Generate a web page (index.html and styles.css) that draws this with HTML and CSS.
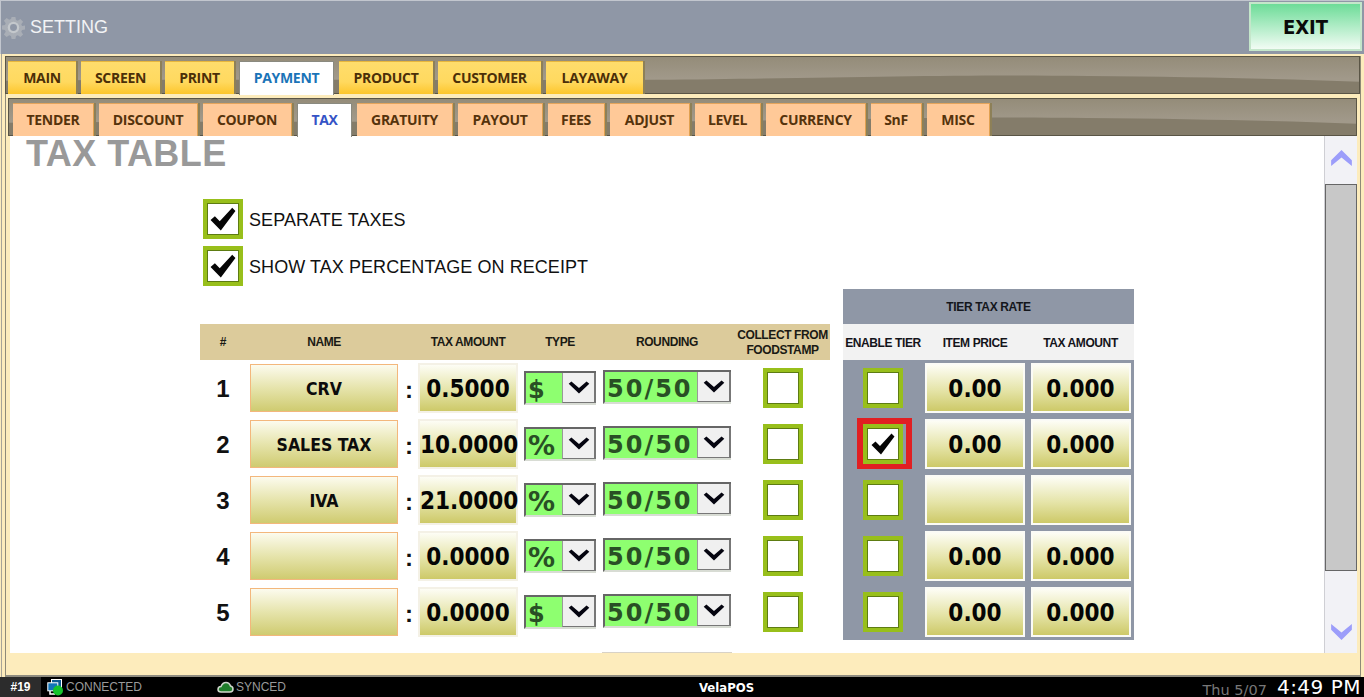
FILE: index.html
```html
<!DOCTYPE html>
<html lang="en">
<head>
<meta charset="utf-8">
<title>Setting</title>
<link rel="stylesheet" href="styles.css">
</head>
<body>
<svg class="defs" width="0" height="0" aria-hidden="true">
  <symbol id="tick" viewBox="0 0 24 22"><path d="M0.5 12 L4.5 8.5 L9 13 L20.5 0.5 L23.5 3.5 L10 21.5 Z"/></symbol>
  <symbol id="chev" viewBox="0 0 20 12"><path d="M0.5 2.5 L3 0.5 L10 6.5 L17 0.5 L19.5 2.5 L10 11.5 Z"/></symbol>
  <symbol id="wave" viewBox="0 0 1000 38" preserveAspectRatio="none"><path d="M0 25 C150 23 300 25 480 24 C620 22 700 18 800 20 C880 21 940 23 1000 26 L1000 38 L0 38 Z"/></symbol>
</svg>
<header class="topbar">
  <div class="title">
    <svg class="gear" viewBox="0 0 24 24" width="23" height="23"><path d="M10 1h4l.6 3.2 1.9.8 2.7-1.9 2.8 2.8-1.9 2.7.8 1.9L24 10v4l-3.1.6-.8 1.9 1.9 2.7-2.8 2.8-2.7-1.9-1.9.8L14 24h-4l-.6-3.1-1.9-.8-2.7 1.9-2.8-2.8 1.9-2.7-.8-1.9L0 14v-4l3.1-.6.8-1.9L2 4.9l2.8-2.8 2.7 1.9 1.9-.8z"/><circle class="gear-hole" cx="12" cy="12" r="6"/><circle class="gear-core" cx="12" cy="12" r="3.6"/></svg>
    <span>SETTING</span>
  </div>
  <button class="exit">EXIT</button>
</header>
<main class="panel">
  <div class="outer">
    <nav class="bar tabs-main">
      <svg class="wave"><use href="#wave"/></svg>
      <a class="tab gold">MAIN</a><a class="tab gold">SCREEN</a><a class="tab gold">PRINT</a><a class="tab active pay">PAYMENT</a><a class="tab gold">PRODUCT</a><a class="tab gold">CUSTOMER</a><a class="tab gold">LAYAWAY</a>
    </nav>
    <div class="inner">
      <nav class="bar tabs-sub">
        <svg class="wave"><use href="#wave"/></svg>
        <a class="tab peach">TENDER</a><a class="tab peach">DISCOUNT</a><a class="tab peach">COUPON</a><a class="tab active tax">TAX</a><a class="tab peach">GRATUITY</a><a class="tab peach">PAYOUT</a><a class="tab peach">FEES</a><a class="tab peach">ADJUST</a><a class="tab peach">LEVEL</a><a class="tab peach">CURRENCY</a><a class="tab peach">SnF</a><a class="tab peach">MISC</a>
      </nav>
      <section class="content">
        <div class="page">
          <h1 class="page-title">TAX TABLE</h1>
          <label class="opt"><span class="chk"><svg class="tick"><use href="#tick"/></svg></span><span class="opt-text">SEPARATE TAXES</span></label>
          <label class="opt"><span class="chk"><svg class="tick"><use href="#tick"/></svg></span><span class="opt-text">SHOW TAX PERCENTAGE ON RECEIPT</span></label>
          <div class="tables">
            <div class="taxes">
              <div class="row head">
                <div class="c-num">#</div><div class="c-name">NAME</div><div></div><div class="c-amt">TAX AMOUNT</div><div class="c-type">TYPE</div><div class="c-round">ROUNDING</div><div class="c-coll">COLLECT FROM<br>FOODSTAMP</div>
              </div>
              <div class="row">
                <div class="c-num num">1</div><button class="c-name name">CRV</button><div class="colon">:</div><button class="c-amt val">0.5000</button>
                <div class="c-type sel"><span class="sel-v">$</span><span class="sel-a"><svg class="chev"><use href="#chev"/></svg></span></div>
                <div class="c-round sel rnd"><span class="sel-v">50/50</span><span class="sel-a"><svg class="chev"><use href="#chev"/></svg></span></div>
                <div class="c-coll"><span class="chk"></span></div>
              </div>
              <div class="row">
                <div class="c-num num">2</div><button class="c-name name">SALES TAX</button><div class="colon">:</div><button class="c-amt val">10.0000</button>
                <div class="c-type sel"><span class="sel-v pct">%</span><span class="sel-a"><svg class="chev"><use href="#chev"/></svg></span></div>
                <div class="c-round sel rnd"><span class="sel-v">50/50</span><span class="sel-a"><svg class="chev"><use href="#chev"/></svg></span></div>
                <div class="c-coll"><span class="chk"></span></div>
              </div>
              <div class="row">
                <div class="c-num num">3</div><button class="c-name name">IVA</button><div class="colon">:</div><button class="c-amt val">21.0000</button>
                <div class="c-type sel"><span class="sel-v pct">%</span><span class="sel-a"><svg class="chev"><use href="#chev"/></svg></span></div>
                <div class="c-round sel rnd"><span class="sel-v">50/50</span><span class="sel-a"><svg class="chev"><use href="#chev"/></svg></span></div>
                <div class="c-coll"><span class="chk"></span></div>
              </div>
              <div class="row">
                <div class="c-num num">4</div><button class="c-name name"></button><div class="colon">:</div><button class="c-amt val">0.0000</button>
                <div class="c-type sel"><span class="sel-v pct">%</span><span class="sel-a"><svg class="chev"><use href="#chev"/></svg></span></div>
                <div class="c-round sel rnd"><span class="sel-v">50/50</span><span class="sel-a"><svg class="chev"><use href="#chev"/></svg></span></div>
                <div class="c-coll"><span class="chk"></span></div>
              </div>
              <div class="row">
                <div class="c-num num">5</div><button class="c-name name"></button><div class="colon">:</div><button class="c-amt val">0.0000</button>
                <div class="c-type sel"><span class="sel-v">$</span><span class="sel-a"><svg class="chev"><use href="#chev"/></svg></span></div>
                <div class="c-round sel rnd"><span class="sel-v">50/50</span><span class="sel-a"><svg class="chev"><use href="#chev"/></svg></span></div>
                <div class="c-coll"><span class="chk"></span></div>
              </div>
              <div class="next-peek"></div>
            </div>
            <div class="tier">
              <div class="tier-title">TIER TAX RATE</div>
              <div class="trow thead"><div>ENABLE TIER</div><div>ITEM PRICE</div><div>TAX AMOUNT</div></div>
              <div class="trow"><div><span class="chk"></span></div><button class="tval">0.00</button><button class="tval">0.000</button></div>
              <div class="trow"><div><span class="hl"><span class="chk"><svg class="tick small"><use href="#tick"/></svg></span></span></div><button class="tval">0.00</button><button class="tval">0.000</button></div>
              <div class="trow"><div><span class="chk"></span></div><button class="tval"></button><button class="tval"></button></div>
              <div class="trow"><div><span class="chk"></span></div><button class="tval">0.00</button><button class="tval">0.000</button></div>
              <div class="trow"><div><span class="chk"></span></div><button class="tval">0.00</button><button class="tval">0.000</button></div>
            </div>
          </div>
        </div>
        <aside class="scroll">
          <svg class="arrow" viewBox="0 0 22 17" width="21" height="16"><path d="M11 0 L22 11 L22 17 L11 8 L0 17 L0 11 Z"/></svg>
          <div class="thumb"></div>
          <svg class="arrow" viewBox="0 0 22 17" width="21" height="16"><path d="M0 0 L11 9 L22 0 L22 6 L11 17 L0 6 Z"/></svg>
        </aside>
      </section>
    </div>
  </div>
</main>
<footer class="status">
  <div class="station">#19</div>
  <div class="conn">
    <svg viewBox="0 0 17 17" width="17" height="17"><rect class="s1" x="4.5" y="0.5" width="10" height="8"/><rect class="s2" x="0.8" y="3.8" width="10" height="8"/><path class="s3" d="M3 12v3h5"/><circle class="s4" cx="11" cy="11.5" r="5"/></svg>
    <span>CONNECTED</span>
  </div>
  <div class="sync">
    <svg viewBox="0 0 17 12" width="17" height="12"><path class="c1" d="M1 8.5 C1 6 3 5.5 4 5.5 C5 3 7 1.5 9 1.5 C11.5 1.5 13 3.500 13.500 5 C15 5.200 16 6.500 16 8 C16 10 14.500 11 13 11 L4 11 C2 11 1 10 1 8.500Z"/></svg>
    <span>SYNCED</span>
  </div>
  <div class="brand">VelaPOS</div>
  <div class="date">Thu 5/07</div>
  <div class="time">4:49 PM</div>
</footer>
</body>
</html>
```
FILE: styles.css
```css
* { box-sizing: border-box; }
html, body { margin: 0; padding: 0; }
body {
  width: 1364px;
  height: 697px;
  overflow: hidden;
  display: flex;
  flex-direction: column;
  background: #fdecbc;
  font-family: "Liberation Sans", Arial, sans-serif;
}
.defs { position: absolute; }
button { font: inherit; padding: 0; cursor: default; }

/* top bar */
.topbar {
  height: 54px;
  flex: none;
  display: flex;
  justify-content: space-between;
  background: #8f97a6;
  border-top: 1px solid #c2c6ce;
  border-left: 1px solid #c2c6ce;
  padding: 1px 2px 2px 1px;
}
.title { display: flex; align-items: center; gap: 5px; color: #f2f3f5; font-size: 18px; padding-top: 1px; }
.gear { fill: #a9aeb6; }
.gear-hole { fill: #c4c8cc; }
.gear-core { fill: #8f97a6; }
.exit {
  width: 113px;
  height: 49px;
  border: 2px solid #c4e6ca;
  background: linear-gradient(#6ddc98, #f2fcf4);
  font-family: "DejaVu Sans Condensed", "DejaVu Sans", sans-serif;
  font-stretch: condensed;
  font-weight: 700;
  font-size: 20px;
  color: #0a0a0a;
}

/* panel + tab frames */
.panel {
  flex: 1;
  min-height: 0;
  margin-left: 1px;
  border-left: 1px solid #a8a498;
  padding: 2px 3px 0 3px;
  background: #fdecbc;
  display: flex;
}
.outer {
  flex: 1;
  display: flex;
  flex-direction: column;
  border-left: 1px solid #8f8a78;
  border-right: 1px solid #8f8a78;
  border-bottom: 2px solid #8f8c80;
}
.inner {
  flex: 1;
  margin: 4px 3px 0 2px;
  display: flex;
  flex-direction: column;
  min-height: 0;
}
.bar {
  position: relative;
  height: 38px;
  flex: none;
  display: grid;
  column-gap: 5px;
  align-items: end;
  justify-content: start;
  border: 1px solid #5a5546;
  background: linear-gradient(#948c79, #a1998a 60%);
}
.wave { position: absolute; inset: 0; width: 100%; height: 100%; fill: #847c6a; }
.tabs-main {
  margin-left: -1px;
  padding-left: 2px;
  grid-template-columns: 68px 79px 69px 95px 94px 103px 97px;
}
.tabs-sub {
  padding-left: 4px;
  grid-template-columns: 81px 99px 89px 55px 96px 85px 57px 80px 66px 100px 51px 63px;
}
.tab {
  position: relative;
  height: 33px;
  margin-bottom: -1px;
  padding-bottom: 2px;
  display: flex;
  align-items: center;
  justify-content: center;
  font-family: "Open Sans", sans-serif;
  font-weight: 700;
  font-size: 14px;
  letter-spacing: -0.3px;
  color: #55330c;
  box-shadow: 2px 0 0 #8d8058;
}
.gold { background: linear-gradient(#ffdd6c, #ffd95f 62%, #fdc62c); border-top: 1px solid #e8b73c; color: #4b2f08; }
.peach { background: #ffc998; border-top: 1px solid #e3a45c; border-right: 1px solid #e0a050; }
.active {
  background: #fff;
  border: 1px solid #8a8a80;
  border-bottom: 0;
  height: 34px;
  margin-bottom: -2px;
  padding-bottom: 3px;
  box-shadow: none;
  z-index: 1;
}
.pay { color: #1a74b8; }
.tax { color: #3553c6; }

/* content */
.content {
  height: 517px;
  flex: none;
  margin-left: 2px;
  display: flex;
  background: #fff;
}
.page { flex: 1; min-width: 0; }
.page-title {
  margin: -2px 0 25px 16px;
  height: 40px;
  font-size: 36px;
  line-height: 40px;
  letter-spacing: 0.45px;
  font-weight: 700;
  color: #999;
}
.opt {
  display: flex;
  align-items: center;
  gap: 6px;
  height: 40px;
  margin: 0 0 7px 193px;
  font-size: 18px;
  letter-spacing: 0.07px;
  color: #111;
}
.opt-text { padding-top: 3px; }
.chk {
  position: relative;
  flex: none;
  width: 40px;
  height: 40px;
  display: flex;
  align-items: center;
  justify-content: center;
  background: #fff;
  border: 4px solid #98bf1b;
  box-shadow: inset 0 0 0 1px #5d7c12;
}
.tick { width: 26px; height: 24px; fill: #050505; }
.tick.small { width: 24px; height: 22px; }
.hl {
  display: block;
  margin: -6px -9px -5px -6px;
  border: 6px solid #e11f22;
  border-bottom-width: 5px;
  padding-right: 3px;
}

/* tables */
.tables { display: flex; margin: -4px 0 0 190px; gap: 13px; align-items: flex-start; }
.taxes { width: 630px; padding-top: 35px; }
.row {
  height: 56px;
  display: grid;
  grid-template-columns: 50px 148px 20px 100px 81px 136px 95px;
  align-items: center;
}
.row.head {
  height: 36px;
  padding-top: 1px;
  background: #dccb9b;
  font-size: 12px;
  font-weight: 700;
  letter-spacing: -0.4px;
  line-height: 15px;
  text-align: center;
  color: #1a1a14;
}
.c-num { margin-right: 4px; text-align: center; }
.c-type { margin-left: 6px; width: 72px; }
.c-round { margin-left: 4px; width: 128px; }
.c-coll { display: flex; justify-content: center; }
.head .c-coll { display: block; white-space: nowrap; }
.num { font-size: 24px; font-weight: 700; color: #111; padding-top: 2px; }
.colon { font-size: 24px; font-weight: 700; text-align: center; color: #111; padding: 4px 0 0 2px; }
.name {
  height: 48px;
  padding-top: 2px;
  border: 1px solid #f3b77c;
  background: linear-gradient(#fcfbee, #e6e4ac 50%, #cfcb70);
  font-family: "DejaVu Sans Condensed", "DejaVu Sans", sans-serif;
  font-stretch: condensed;
  font-weight: 700;
  font-size: 17.500px;
  color: #0c0c0c;
}
.val, .tval {
  height: 50px;
  padding-top: 2px;
  border: 2px solid #f4f1e6;
  background: linear-gradient(#fdfdf5, #e5e4a8 55%, #cdc968);
  font-family: "DejaVu Sans Condensed", "DejaVu Sans", sans-serif;
  font-stretch: condensed;
  font-weight: 700;
  font-size: 24px;
  color: #050505;
  white-space: nowrap;
}
.sel {
  height: 34px;
  display: flex;
  border-top: 2px solid #666;
  border-left: 2px solid #666;
  border-bottom: 2px solid #d8dcd4;
  background: #8eff70;
}
.sel-v {
  flex: 1;
  min-width: 0;
  padding-left: 2px;
  font-family: "DejaVu Sans", sans-serif;
  font-weight: 700;
  font-size: 24px;
  line-height: 34px;
  letter-spacing: 2px;
  color: #294f25;
  white-space: nowrap;
}
.pct { font-size: 27px; letter-spacing: 0; }
.sel-a {
  flex: none;
  width: 34px;
  display: flex;
  align-items: center;
  justify-content: center;
  background: #f0f0f0;
  border-left: 1px solid #999;
  border-right: 2px solid #777;
  border-bottom: 1px solid #777;
}
.rnd { margin-top: -2px; }
.chev { width: 22px; height: 13px; fill: #050510; margin-top: -1px; }
.next-peek { width: 130px; height: 1px; margin: 12px 0 0 402px; background: #d8d2c6; }

.tier { width: 291px; background: #8f97a6; }
.tier-title {
  height: 35px;
  display: flex;
  align-items: center;
  justify-content: center;
  font-size: 12px;
  font-weight: 700;
  letter-spacing: -0.35px;
  color: #14161c;
}
.trow {
  height: 56px;
  display: grid;
  grid-template-columns: 80px 104px 107px;
  align-items: center;
  justify-items: center;
}
.trow > div { display: flex; justify-content: center; }
.trow.thead {
  height: 36px;
  padding-top: 1px;
  background: #f2f2f2;
  font-size: 12px;
  font-weight: 700;
  letter-spacing: -0.4px;
  color: #14141a;
}
.tval { width: 100px; border-color: #fbfbf6; }

/* scrollbar */
.scroll {
  width: 33px;
  flex: none;
  display: flex;
  flex-direction: column;
  align-items: center;
  background: #f2f2f6;
  border-left: 1px solid #cfcfd4;
  padding-top: 14px;
}
.arrow { fill: #9c9dfa; flex: none; }
.thumb {
  width: 32px;
  height: 387px;
  margin: 18px 0 53px;
  background: #c8c8c8;
  border: 1px solid #666;
}

/* status bar */
.status {
  height: 20px;
  flex: none;
  display: flex;
  align-items: center;
  background: #000;
  color: #9a9a9a;
  font-size: 12px;
}
.station {
  width: 41px;
  height: 20px;
  background: #2c2c2c;
  color: #fff;
  font-weight: 700;
  text-align: center;
  line-height: 20px;
}
.conn { display: flex; align-items: center; gap: 2px; margin-left: 6px; width: 170px; }
.s1 { fill: #0c5a94; stroke: #fff; }
.s2 { fill: #1274b8; stroke: #fff; }
.s3 { fill: none; stroke: #fff; stroke-width: 1.500; }
.s4 { fill: #16c22c; }
.sync { display: flex; align-items: center; gap: 2px; width: 482px; }
.c1 { fill: #1f7d2a; stroke: #cfd6cc; stroke-width: 1.500; }
.brand {
  width: 56px;
  font-family: "DejaVu Sans Condensed", "DejaVu Sans", sans-serif;
  font-stretch: condensed;
  font-weight: 700;
  font-size: 13px;
  color: #fff;
}
.date {
  margin-left: auto;
  font-family: "DejaVu Sans", sans-serif;
  font-size: 14.500px;
  color: #777;
  padding-top: 5px;
}
.time {
  margin: 0 3px 0 10px;
  font-family: "DejaVu Sans", sans-serif;
  font-size: 20px;
  letter-spacing: 0.5px;
  color: #fff;
}
```
